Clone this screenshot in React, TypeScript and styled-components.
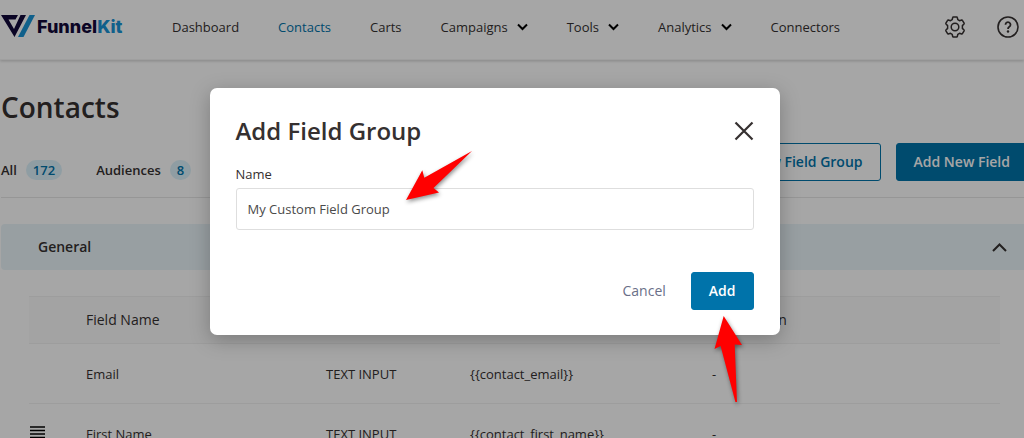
import React, { useState } from "react";
import styled, { createGlobalStyle, css } from "styled-components";

const GlobalStyle = createGlobalStyle`
  *, *::before, *::after { box-sizing: border-box; }
  body {
    margin: 0;
    background: #fff;
    color: #353030;
    font-family: "Open Sans", "Noto Sans", sans-serif;
    font-size: 13px;
    line-height: 20px;
  }
  button, input { font: inherit; color: inherit; }
`;

const Shell = styled.div`
  position: relative;
  height: 100vh;
  overflow: hidden;
`;

const Header = styled.header`
  display: flex;
  align-items: center;
  height: 60px;
  padding: 0 5px 6px 0;
  border-bottom: 1px solid #f4f4f4;
  box-shadow: 0 1px 3px rgba(0, 0, 0, 0.2);
`;

const Logo = styled.a`
  display: flex;
  align-items: center;
  gap: 2px;
  width: 172px;
  color: #12083a;
  font: 800 18px/24px Inter, sans-serif;
  text-decoration: none;
`;

const LogoAccent = styled.span`
  color: #1a94d6;
`;

const Nav = styled.nav`
  display: flex;
  align-items: center;
  gap: 39px;
  flex: 1;
`;

const NavLink = styled.a<{ $active?: boolean }>`
  display: flex;
  align-items: center;
  gap: 9px;
  color: ${(p) => (p.$active ? "#0073aa" : "#353030")};
  font-weight: 500;
  text-decoration: none;
`;

const IconButton = styled.button`
  display: grid;
  place-items: center;
  padding: 0;
  border: 0;
  background: none;
  color: #353030;
`;

const HeaderTools = styled.div`
  display: flex;
  align-items: center;
  gap: 31px;
`;

const Main = styled.main`
  margin-right: -4px;
  padding-left: 1px;
`;

const PageTitle = styled.h1`
  margin: 27px 0 16px;
  font-size: 28px;
  line-height: 40px;
  font-weight: 600;
`;

const Toolbar = styled.div`
  display: flex;
  align-items: center;
  justify-content: space-between;
  padding-bottom: 16px;
  border-bottom: 1px solid #e6e6e6;
`;

const Tabs = styled.div`
  display: flex;
  gap: 34px;
  height: 38px;
  padding-top: 16px;
`;

const Tab = styled.a`
  display: flex;
  align-items: center;
  gap: 9px;
  color: inherit;
  font-weight: 600;
  text-decoration: none;
`;

const Count = styled.span`
  padding: 0 7px;
  border-radius: 10px;
  background: #dcf2fa;
  color: #0073aa;
`;

const Actions = styled.div`
  display: flex;
  gap: 15px;
`;

const Button = styled.button<{ $outline?: boolean }>`
  height: 38px;
  padding: 0 17px;
  border: 1px solid #0073aa;
  border-radius: 3px;
  background: #0073aa;
  color: #fff;
  font-size: 14px;
  font-weight: 600;
  white-space: nowrap;
  ${(p) =>
    p.$outline &&
    css`
      background: #fff;
      color: #0073aa;
    `}
`;

const GroupBar = styled.section`
  display: flex;
  align-items: center;
  justify-content: space-between;
  height: 46px;
  margin-top: 26px;
  padding: 0 21px 0 37px;
  border-radius: 4px;
  background: #eaf5f9;
`;

const GroupName = styled.h2`
  margin: 0;
  font-size: 14px;
  line-height: 20px;
  font-weight: 600;
`;

const TableWrap = styled.div`
  padding: 26px 28px 0;
`;

const Table = styled.table`
  width: 100%;
  border-collapse: collapse;
  table-layout: fixed;
`;

const Column = styled.col<{ $width?: number }>`
  width: ${(p) => (p.$width ? `${p.$width}px` : "auto")};
`;

const HeadCell = styled.th`
  height: 47px;
  padding: 0;
  border: 1px solid #f1f1f1;
  border-width: 1px 0;
  background: #fbfbfb;
  font-size: 14px;
  font-weight: 400;
  text-align: left;
`;

const Cell = styled.td`
  height: 60px;
  padding: 0;
  border-bottom: 1px solid #f1f1f1;
`;

const Handle = styled.button`
  display: block;
  padding: 0;
  border: 0;
  background: none;
`;

const Overlay = styled.div`
  position: absolute;
  inset: 0;
  display: flex;
  align-items: flex-start;
  justify-content: center;
  padding: 88px 35px 0 0;
  background: rgba(0, 0, 0, 0.35);
`;

const Dialog = styled.form`
  position: relative;
  width: 100%;
  max-width: 570px;
  padding: 27px 26px 25px;
  border-radius: 7px;
  background: #fff;
  box-shadow: 0 5px 20px rgba(0, 0, 0, 0.25);
`;

const DialogHead = styled.div`
  display: flex;
  align-items: center;
  justify-content: space-between;
`;

const DialogTitle = styled.h2`
  margin: 0;
  font-size: 24px;
  line-height: 32px;
  font-weight: 600;
`;

const Label = styled.label`
  display: block;
  margin: 17px 0 4px;
`;

const TextInput = styled.input`
  display: block;
  width: 100%;
  height: 42px;
  padding: 0 11px;
  border: 1px solid #dedede;
  border-radius: 3px;
  background: #fff;
  color: #4a4a4a;
  outline: none;
`;

const DialogFoot = styled.div`
  display: flex;
  justify-content: flex-end;
  gap: 25px;
  margin-top: 42px;
`;

const TextButton = styled.button`
  padding: 0;
  border: 0;
  background: none;
  color: #6a6f88;
  font-size: 14px;
`;

const Arrow = styled.svg<{ $x: number; $y: number }>`
  position: absolute;
  left: ${(p) => p.$x}px;
  top: ${(p) => p.$y}px;
  overflow: visible;
  pointer-events: none;
  filter: drop-shadow(1px 2px 2px rgba(0, 0, 0, 0.45));
`;

const Chevron = () => (
  <svg width="11" height="8" viewBox="0 0 11 8" fill="none" stroke="#000" strokeWidth="2">
    <path d="M1 1.5 5.5 6 10 1.5" />
  </svg>
);

const links = [
  { label: "Dashboard" },
  { label: "Contacts", active: true },
  { label: "Carts" },
  { label: "Campaigns", menu: true },
  { label: "Tools", menu: true },
  { label: "Analytics", menu: true },
  { label: "Connectors" },
];

const rows = [
  { name: "Email", tag: "{{contact_email}}", draggable: false },
  { name: "First Name", tag: "{{contact_first_name}}", draggable: true },
];

export default function App() {
  const [name, setName] = useState("My Custom Field Group");
  return (
    <>
      <GlobalStyle />
      <Shell>
        <Header>
          <Logo href="#">
            <svg width="35" height="23" viewBox="0 0 35 23">
              <path d="M1 0h17l-2.500 4.500H8.500L14 14 20.500 0H26L14.500 22Z" fill="#12083a" />
              <path d="M29.500 0H35L23.500 22H18Z" fill="#1a94d6" />
            </svg>
            <span>
              Funnel<LogoAccent>Kit</LogoAccent>
            </span>
          </Logo>
          <Nav>
            {links.map((l) => (
              <NavLink key={l.label} href="#" $active={l.active}>
                {l.label}
                {l.menu && <Chevron />}
              </NavLink>
            ))}
          </Nav>
          <HeaderTools>
            <IconButton aria-label="Settings">
              <svg width="22" height="22" viewBox="0 0 22 22" fill="none" stroke="currentColor" strokeWidth="1.500">
                <path d="M9.300 1h3.400q.5 0 .6.500l.5 2.200 1.700 1 2.200-.7q.5-.1.700.3l1.700 2.900q.2.400-.1.800L18.400 9.600v2.800l1.600 1.600q.3.400.1.800l-1.700 2.900q-.2.400-.7.300l-2.200-.7-1.700 1-.5 2.200q-.1.500-.6.500H9.300q-.5 0-.6-.5l-.5-2.200-1.700-1-2.200.7q-.5.100-.7-.3l-1.700-2.900q-.2-.4.100-.8l1.600-1.600V9.600L2 8q-.3-.4-.1-.8l1.700-2.900q.2-.4.700-.3l2.200.7 1.700-1 .5-2.200q.1-.5.600-.5Z" strokeLinejoin="round" />
                <circle cx="11" cy="11" r="3.800" />
              </svg>
            </IconButton>
            <IconButton aria-label="Help">
              <svg width="22" height="22" viewBox="0 0 22 22" fill="none" stroke="currentColor" strokeWidth="1.600">
                <circle cx="11" cy="11" r="10" />
                <path d="M8.500 8.700a2.500 2.500 0 1 1 3.800 2.100c-.9.600-1.300 1-1.300 2.100" strokeWidth="1.800" />
                <circle cx="11" cy="15.500" r="1.200" fill="currentColor" stroke="none" />
              </svg>
            </IconButton>
          </HeaderTools>
        </Header>
        <Main>
          <PageTitle>Contacts</PageTitle>
          <Toolbar>
            <Tabs>
              <Tab href="#">
                All <Count>172</Count>
              </Tab>
              <Tab href="#">
                Audiences <Count>8</Count>
              </Tab>
            </Tabs>
            <Actions>
              <Button $outline>Add New Field Group</Button>
              <Button>Add New Field</Button>
            </Actions>
          </Toolbar>
          <GroupBar>
            <GroupName>General</GroupName>
            <IconButton aria-label="Collapse General">
              <svg width="15" height="9" viewBox="0 0 15 9" fill="none" stroke="currentColor" strokeWidth="2">
                <path d="M1 8 7.500 1.500 14 8" />
              </svg>
            </IconButton>
          </GroupBar>
          <TableWrap>
            <Table>
              <colgroup>
                <Column $width={57} />
                <Column $width={240} />
                <Column $width={144} />
                <Column $width={242} />
                <Column />
              </colgroup>
              <thead>
                <tr>
                  <HeadCell />
                  <HeadCell>Field Name</HeadCell>
                  <HeadCell>Type</HeadCell>
                  <HeadCell>Merge Tag</HeadCell>
                  <HeadCell>Description</HeadCell>
                </tr>
              </thead>
              <tbody>
                {rows.map((r) => (
                  <tr key={r.name}>
                    <Cell>
                      {r.draggable && (
                        <Handle aria-label={`Reorder ${r.name}`}>
                          <svg width="20" height="14" viewBox="0 0 20 14" stroke="#000" strokeWidth="1.500">
                            <path d="M1 2h15M1 5.500h15M1 9h15M1 12.500h15" />
                          </svg>
                        </Handle>
                      )}
                    </Cell>
                    <Cell>{r.name}</Cell>
                    <Cell>TEXT INPUT</Cell>
                    <Cell>{r.tag}</Cell>
                    <Cell>-</Cell>
                  </tr>
                ))}
              </tbody>
            </Table>
          </TableWrap>
        </Main>
        <Overlay>
          <Dialog role="dialog" aria-labelledby="dialog-title" onSubmit={(e) => e.preventDefault()}>
            <DialogHead>
              <DialogTitle id="dialog-title">Add Field Group</DialogTitle>
              <IconButton type="button" aria-label="Close">
                <svg width="20" height="20" viewBox="0 0 20 20" stroke="currentColor" strokeWidth="2.200">
                  <path d="m1.500 1.500 17 17m0-17-17 17" />
                </svg>
              </IconButton>
            </DialogHead>
            <Label htmlFor="group-name">Name</Label>
            <TextInput id="group-name" value={name} onChange={(e) => setName(e.target.value)} />
            <DialogFoot>
              <TextButton type="button">Cancel</TextButton>
              <Button type="submit">Add</Button>
            </DialogFoot>
            <Arrow $x={196} $y={63} width="66" height="50" viewBox="0 0 66 50" aria-hidden="true">
              <path d="M0 49 16.300 19.300 18.300 26.700 66 0 27.500 37 33 41.500Z" fill="#f00" />
            </Arrow>
            <Arrow $x={504} $y={228} width="28" height="86" viewBox="0 0 28 86" aria-hidden="true">
              <path d="M9.700 0 28 29l-7.300-.6L23 86h-1.600L6.600 30 .5 33Z" fill="#f00" />
            </Arrow>
          </Dialog>
        </Overlay>
      </Shell>
    </>
  );
}
